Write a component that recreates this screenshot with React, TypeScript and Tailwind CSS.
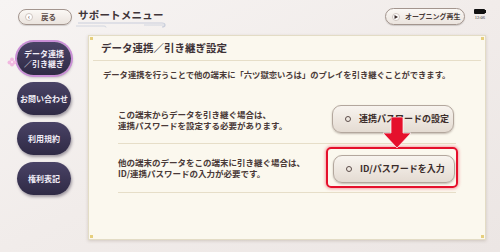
import React from 'react';

const font = { fontFamily: '"Noto Sans CJK JP", "Noto Sans", sans-serif' };

const SideItem: React.FC<{ label: React.ReactNode; active?: boolean }> = ({ label, active }) => (
  <div
    className={`w-[54px] h-[33px] rounded-full flex items-center justify-center text-center text-[8px] leading-[10px] font-bold text-[#f1edf6] bg-gradient-to-b from-[#4a4366] to-[#2f2a45] shadow-[1px_2px_3px_rgba(60,50,70,0.45)] ${
      active ? 'ring-2 ring-[#c98fd6] shadow-[0_0_5px_2px_rgba(214,150,226,0.6)]' : ''
    }`}
  >
    {label}
  </div>
);

const ActionButton: React.FC<{ label: string }> = ({ label }) => (
  <div className="w-[122px] h-[28px] rounded-[9px] border border-[#b3a79d] bg-gradient-to-b from-[#f8f4ef] to-[#e4dbd2] shadow-[0_1px_2px_rgba(90,70,60,0.35)] flex items-center pl-[12px] gap-[8px] text-[9px] font-bold text-[#3b2c2a] whitespace-nowrap">
    <span className="w-[6px] h-[6px] rounded-full border border-[#5c4c49]" />
    <span>{label}</span>
  </div>
);

const App: React.FC = () => {
  return (
    <div
      className="w-[500px] h-[252px] overflow-hidden bg-gradient-to-br from-[#f7f4f3] via-[#f1ecea] to-[#ece6e4] flex flex-col"
      style={font}
    >
      {/* top bar */}
      <div className="h-[35px] flex items-start pt-[9px] pl-[18px] pr-[14px]">
        <div className="w-[54px] h-[16px] rounded-full border border-[#a3958e] bg-gradient-to-b from-[#fbf8f5] to-[#ebe4de] flex items-center pl-[6px] gap-[8px] text-[7.5px] font-bold text-[#5d4d4a] shadow-[0_1px_1px_rgba(0,0,0,0.15)]">
          <span className="w-[8px] h-[8px] rounded-full bg-white border border-[#cfc5bf] flex items-center justify-center text-[6px] leading-none">‹</span>
          <span>戻る</span>
        </div>
        <div className="relative ml-[6px] -mt-[2px]">
          <div className="text-[10.5px] font-bold text-[#3e3438] tracking-[0.2px]">サポートメニュー</div>
          <svg className="absolute left-[-4px] top-[13px]" width="94" height="9" viewBox="0 0 94 9">
            <path d="M4 3 H88 q3 0 3 2 t-3 2" fill="none" stroke="#c9cedb" strokeWidth="1.2" />
            <path d="M2 6 H30 q2 0 2 1.5" fill="none" stroke="#d2d6e0" strokeWidth="1" />
            <path d="M70 5 H90" fill="none" stroke="#d2d6e0" strokeWidth="1" />
          </svg>
        </div>
        <div className="flex-1" />
        <div className="w-[80px] h-[17px] -mt-[1px] rounded-full border border-[#a3958e] bg-gradient-to-b from-[#fbf8f5] to-[#ebe4de] flex items-center pl-[6px] gap-[5px] text-[7px] font-bold text-[#4a3c3a] whitespace-nowrap shadow-[0_1px_1px_rgba(0,0,0,0.15)]">
          <span className="w-[8px] h-[8px] shrink-0 rounded-full bg-white border border-[#cfc5bf] flex items-center justify-center">
            <svg width="4" height="4" viewBox="0 0 4 4"><path d="M0.5 0 L4 2 L0.5 4 Z" fill="#3b2c2a" /></svg>
          </span>
          <span>オープニング再生</span>
        </div>
        <div className="ml-[9px] flex flex-col items-center">
          <div className="flex items-center">
            <div className="w-[11px] h-[5px] bg-[#111] rounded-[1px]" />
            <div className="w-[1px] h-[3px] bg-[#111]" />
          </div>
          <div className="text-[4.5px] leading-[6px] mt-[1px] text-[#333]" style={{ fontFamily: '"Liberation Serif", serif' }}>12:06</div>
        </div>
      </div>

      <div className="flex flex-1">
        {/* sidebar */}
        <div className="w-[88px] pl-[17px] pt-[7px] flex flex-col gap-[7px] relative">
          <svg className="absolute left-[7px] top-[22px]" width="10" height="10" viewBox="0 0 10 10">
            <circle cx="5" cy="2.5" r="2" fill="#f1b8e0" />
            <circle cx="2.5" cy="5.5" r="2" fill="#f1b8e0" />
            <circle cx="7.5" cy="5.5" r="2" fill="#f1b8e0" />
            <circle cx="5" cy="7.5" r="2" fill="#f1b8e0" />
            <circle cx="5" cy="5" r="1.2" fill="#fbe3f2" />
          </svg>
          <SideItem active label={<>データ連携<br />／引き継ぎ</>} />
          <SideItem label="お問い合わせ" />
          <SideItem label="利用規約" />
          <SideItem label="権利表記" />
        </div>

        {/* main panel */}
        <div className="relative w-[398px] h-[205px] bg-[#fbf8ee] border border-[#e3dcc5] shadow-[0_1px_3px_rgba(120,100,80,0.25)] text-[#3b2c2a]">
          <span className="absolute left-[1px] top-[1px] w-[3px] h-[3px] bg-[#e6cf7e]" />
          <span className="absolute right-[1px] top-[1px] w-[3px] h-[3px] bg-[#e6cf7e]" />
          <span className="absolute left-[1px] bottom-[1px] w-[3px] h-[3px] bg-[#e6cf7e]" />
          <span className="absolute right-[1px] bottom-[1px] w-[3px] h-[3px] bg-[#e6cf7e]" />

          <div className="h-[24px] flex items-center pl-[12px] text-[10.5px] font-bold text-[#3e3236]">
            データ連携／引き継ぎ設定
          </div>
          <div className="mx-[4px] border-t border-[#e6dec8]" />
          <div className="mt-[7px] pl-[14px] text-[8.3px] leading-[13px] font-bold text-[#4a3a38]">
            データ連携を行うことで他の端末に「六ツ獄恋いろは」のプレイを引き継ぐことができます。
          </div>

          <div className="mt-[14px] ml-[29px] w-[338px]">
            <div className="h-[49px] flex items-center justify-between border-b border-[#e6dec8] pr-[2px]">
              <div className="text-[8.5px] leading-[11px] font-bold text-[#4a3a38] pt-[2px]">
                この端末からデータを引き継ぐ場合は、<br />連携パスワードを設定する必要があります。
              </div>
              <ActionButton label="連携パスワードの設定" />
            </div>
            <div className="h-[49px] flex items-center justify-between border-b border-[#e6dec8] pr-[1px]">
              <div className="text-[8.5px] leading-[11px] font-bold text-[#4a3a38]">
                他の端末のデータをこの端末に引き継ぐ場合は、<br />ID/連携パスワードの入力が必要です。
              </div>
              <div className="relative mt-[2px]">
                <ActionButton label="ID/パスワードを入力" />
                <div className="absolute left-[-7px] right-[-3px] top-[-8px] bottom-[-5px] rounded-[5px] border-2 border-[#e5102c] shadow-[0_0_3px_1px_rgba(229,16,44,0.35)]" />
              </div>
            </div>
          </div>

          {/* red arrow */}
          <svg className="absolute left-[293px] top-[81px]" width="30" height="32" viewBox="0 0 30 32">
            <path d="M9 0 H21 V16 H29 L15 31 L1 16 H9 Z" fill="#e5102c" stroke="rgba(255,255,255,0.7)" strokeWidth="1" />
          </svg>
        </div>
      </div>
    </div>
  );
};

export default App;
